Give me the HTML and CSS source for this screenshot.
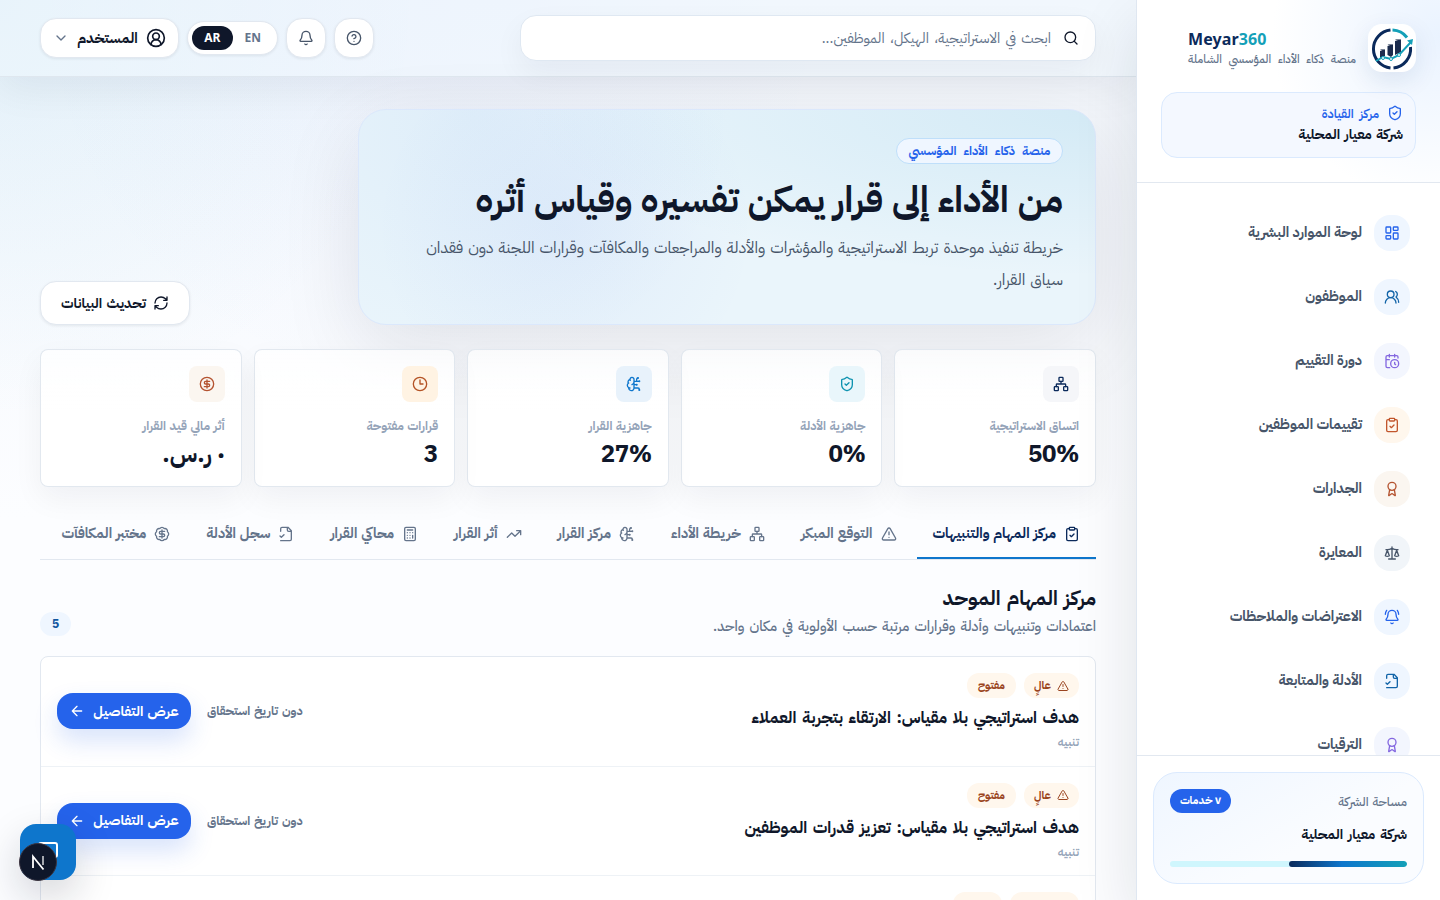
FILE: index.html
```
<!DOCTYPE html>
<html lang="ar" dir="rtl">
<head>
    <meta charset="UTF-8">
    <meta name="viewport" content="width=device-width, initial-scale=1.0">
    <title>Meyar360</title>
    <link rel="stylesheet" href="styles.css">
</head>
<body>
    <!-- Icon set -->
    <svg class="sprite">
        <symbol id="i-dashboard" viewBox="0 0 24 24"><rect x="3" y="3" width="7" height="9" rx="1"/><rect x="14" y="3" width="7" height="5" rx="1"/><rect x="14" y="12" width="7" height="9" rx="1"/><rect x="3" y="16" width="7" height="5" rx="1"/></symbol>
        <symbol id="i-users" viewBox="0 0 24 24"><path d="M18 21a8 8 0 0 0-16 0"/><circle cx="10" cy="8" r="5"/><path d="M22 20c0-3.37-2-6.5-4-8a5 5 0 0 0-.45-8.3"/></symbol>
        <symbol id="i-calendar" viewBox="0 0 24 24"><path d="M21 7.5V6a2 2 0 0 0-2-2H5a2 2 0 0 0-2 2v14a2 2 0 0 0 2 2h3.5M16 2v4M8 2v4M3 10h5M17.5 17.5 16 16.3V14"/><circle cx="16" cy="16" r="6"/></symbol>
        <symbol id="i-clipboard" viewBox="0 0 24 24"><rect x="8" y="2" width="8" height="4" rx="1"/><path d="M16 4h2a2 2 0 0 1 2 2v14a2 2 0 0 1-2 2H6a2 2 0 0 1-2-2V6a2 2 0 0 1 2-2h2M9 14l2 2 4-4"/></symbol>
        <symbol id="i-award" viewBox="0 0 24 24"><path d="m15.477 12.89 1.515 8.526a.5.5 0 0 1-.81.47l-3.58-2.687a1 1 0 0 0-1.197 0l-3.586 2.686a.5.5 0 0 1-.81-.469l1.514-8.526"/><circle cx="12" cy="8" r="6"/></symbol>
        <symbol id="i-scale" viewBox="0 0 24 24"><path d="m16 16 3-8 3 8c-.87.65-1.92 1-3 1s-2.13-.35-3-1ZM2 16l3-8 3 8c-.87.65-1.92 1-3 1s-2.13-.35-3-1ZM7 21h10M12 3v18M3 7h2c2 0 5-1 7-2 2 1 5 2 7 2h2"/></symbol>
        <symbol id="i-bell-ring" viewBox="0 0 24 24"><path d="M10.268 21a2 2 0 0 0 3.464 0M22 8c0-2.3-.8-4.3-2-6M4 2C2.8 3.7 2 5.7 2 8M3.262 15.326A1 1 0 0 0 4 17h16a1 1 0 0 0 .74-1.673C19.41 13.956 18 12.499 18 8A6 6 0 0 0 6 8c0 4.499-1.411 5.956-2.738 7.326"/></symbol>
        <symbol id="i-bell" viewBox="0 0 24 24"><path d="M10.268 21a2 2 0 0 0 3.464 0M3.262 15.326A1 1 0 0 0 4 17h16a1 1 0 0 0 .74-1.673C19.41 13.956 18 12.499 18 8A6 6 0 0 0 6 8c0 4.499-1.411 5.956-2.738 7.326"/></symbol>
        <symbol id="i-file" viewBox="0 0 24 24"><path d="M4 22h14a2 2 0 0 0 2-2V7l-5-5H6a2 2 0 0 0-2 2v4M14 2v4a2 2 0 0 0 2 2h4M3 15l2 2 4-4"/></symbol>
        <symbol id="i-shield" viewBox="0 0 24 24"><path d="M20 13c0 5-3.5 7.5-7.66 8.95a1 1 0 0 1-.67-.01C7.5 20.5 4 18 4 13V6a1 1 0 0 1 1-1c2 0 4.5-1.2 6.24-2.72a1.17 1.17 0 0 1 1.52 0C14.51 3.81 17 5 19 5a1 1 0 0 1 1 1zM9 12l2 2 4-4"/></symbol>
        <symbol id="i-network" viewBox="0 0 24 24"><rect x="16" y="16" width="6" height="6" rx="1"/><rect x="2" y="16" width="6" height="6" rx="1"/><rect x="9" y="2" width="6" height="6" rx="1"/><path d="M5 16v-3a1 1 0 0 1 1-1h12a1 1 0 0 1 1 1v3M12 12V8"/></symbol>
        <symbol id="i-brain" viewBox="0 0 24 24"><path d="M12 5a3 3 0 1 0-5.997.125 4 4 0 0 0-2.526 5.77 4 4 0 0 0 .556 6.588A4 4 0 1 0 12 18ZM9 13a4.5 4.5 0 0 0 3-4M6.003 5.125A3 3 0 0 0 6.401 6.5M3.477 10.896a4 4 0 0 1 .585-.396M6 18a4 4 0 0 1-1.967-.516M12 13h4M12 18h6a2 2 0 0 1 2 2v1M12 8h8M16 8V5a2 2 0 0 1 2-2"/><circle cx="16" cy="13" r=".5"/><circle cx="18" cy="3" r=".5"/><circle cx="20" cy="21" r=".5"/><circle cx="20" cy="8" r=".5"/></symbol>
        <symbol id="i-clock" viewBox="0 0 24 24"><circle cx="12" cy="12" r="10"/><path d="M12 6v6h4.5"/></symbol>
        <symbol id="i-dollar" viewBox="0 0 24 24"><circle cx="12" cy="12" r="10"/><path d="M16 8h-6a2 2 0 1 0 0 4h4a2 2 0 1 1 0 4H8M12 18V6"/></symbol>
        <symbol id="i-badge" viewBox="0 0 24 24"><path d="M3.85 8.62a4 4 0 0 1 4.78-4.77 4 4 0 0 1 6.74 0 4 4 0 0 1 4.78 4.78 4 4 0 0 1 0 6.74 4 4 0 0 1-4.77 4.78 4 4 0 0 1-6.75 0 4 4 0 0 1-4.78-4.77 4 4 0 0 1 0-6.76ZM16 8h-6a2 2 0 1 0 0 4h4a2 2 0 1 1 0 4H8M12 18V6"/></symbol>
        <symbol id="i-calc" viewBox="0 0 24 24"><rect x="4" y="2" width="16" height="20" rx="2"/><path d="M8 6h8M16 14v4M16 10h.01M12 10h.01M8 10h.01M12 14h.01M8 14h.01M12 18h.01M8 18h.01"/></symbol>
        <symbol id="i-trend" viewBox="0 0 24 24"><path d="m22 7-8.5 8.5-5-5L2 17M16 7h6v6"/></symbol>
        <symbol id="i-alert" viewBox="0 0 24 24"><path d="m21.73 18-8-14a2 2 0 0 0-3.48 0l-8 14A2 2 0 0 0 4 21h16a2 2 0 0 0 1.73-3M12 9v4M12 17h.01"/></symbol>
        <symbol id="i-refresh" viewBox="0 0 24 24"><path d="M3 12a9 9 0 0 1 9-9 9.75 9.75 0 0 1 6.74 2.74L21 8M21 3v5h-5M21 12a9 9 0 0 1-9 9 9.75 9.75 0 0 1-6.74-2.74L3 16M8 16H3v5"/></symbol>
        <symbol id="i-search" viewBox="0 0 24 24"><circle cx="11" cy="11" r="8"/><path d="m21 21-4.3-4.3"/></symbol>
        <symbol id="i-help" viewBox="0 0 24 24"><circle cx="12" cy="12" r="10"/><path d="M9.09 9a3 3 0 0 1 5.83 1c0 2-3 3-3 3M12 17h.01"/></symbol>
        <symbol id="i-user" viewBox="0 0 24 24"><path d="M18 20a6 6 0 0 0-12 0"/><circle cx="12" cy="10" r="4"/><circle cx="12" cy="12" r="10"/></symbol>
        <symbol id="i-chevron" viewBox="0 0 24 24"><path d="m6 9 6 6 6-6"/></symbol>
        <symbol id="i-arrow" viewBox="0 0 24 24"><path d="m12 19-7-7 7-7M19 12H5"/></symbol>
        <symbol id="i-message" viewBox="0 0 24 24"><path d="M21 15a2 2 0 0 1-2 2H7l-4 4V5a2 2 0 0 1 2-2h14a2 2 0 0 1 2 2z"/></symbol>
    </svg>

    <div class="app">
        <aside class="sidebar">
            <div class="sidebar-head">
                <div class="brand">
                    <div class="brand-logo">
                        <svg viewBox="0 0 48 48">
                            <g fill="none" stroke-width="3">
                                <path d="M22.500 6.100A19 19 0 0 0 22.500 43.900M25.500 43.900A19 19 0 0 0 42.500 23" stroke="#0b2a5b"/>
                                <path d="M24.500 6A19 19 0 0 1 39 13.500" stroke="#14a0b8"/>
                            </g>
                            <g fill="#1c2c4e"><path d="M12 27l5-2v7l-5 2z"/><path d="M19.500 22l5.500-2v11l-2 2-3.500-2z"/><path d="M27 17l6-2v13l-6 3z"/></g>
                            <g fill="#7d8798"><path d="M12 26l1-1h4v1zM19.500 21l1-1H25v1zM27 16l1-1h5v1z"/></g>
                            <path d="M8 37l7-4 8 2 8-4 12-13" fill="none" stroke="#14a0b8" stroke-width="2"/>
                            <path d="M39 16.500l6-1.500-1 6z" fill="#14a0b8"/>
                            <g fill="#fff" stroke="#14a0b8"><circle cx="15" cy="34" r="1.500"/><circle cx="23" cy="35" r="1.500"/><circle cx="31" cy="31" r="1.500"/></g>
                        </svg>
                    </div>
                    <div class="brand-text">
                        <div class="brand-name" dir="ltr">Meyar<span>360</span></div>
                        <div class="brand-tag">منصة ذكاء الأداء المؤسسي الشاملة</div>
                    </div>
                </div>
                <div class="center-card">
                    <div class="center-label"><svg class="icon"><use href="#i-shield"/></svg><span>مركز القيادة</span></div>
                    <div class="center-name">شركة معيار المحلية</div>
                </div>
            </div>

            <nav class="nav">
                <a class="nav-item"><span class="nav-icon blue"><svg class="icon"><use href="#i-dashboard"/></svg></span><span>لوحة الموارد البشرية</span></a>
                <a class="nav-item"><span class="nav-icon ocean"><svg class="icon"><use href="#i-users"/></svg></span><span>الموظفون</span></a>
                <a class="nav-item"><span class="nav-icon violet"><svg class="icon"><use href="#i-calendar"/></svg></span><span>دورة التقييم</span></a>
                <a class="nav-item"><span class="nav-icon orange"><svg class="icon"><use href="#i-clipboard"/></svg></span><span>تقييمات الموظفين</span></a>
                <a class="nav-item"><span class="nav-icon sand"><svg class="icon"><use href="#i-award"/></svg></span><span>الجدارات</span></a>
                <a class="nav-item"><span class="nav-icon slate"><svg class="icon"><use href="#i-scale"/></svg></span><span>المعايرة</span></a>
                <a class="nav-item"><span class="nav-icon blue"><svg class="icon"><use href="#i-bell-ring"/></svg></span><span>الاعتراضات والملاحظات</span></a>
                <a class="nav-item"><span class="nav-icon ocean"><svg class="icon"><use href="#i-file"/></svg></span><span>الأدلة والمتابعة</span></a>
                <a class="nav-item"><span class="nav-icon violet"><svg class="icon"><use href="#i-award"/></svg></span><span>الترقيات</span></a>
            </nav>

            <div class="sidebar-foot">
                <div class="space-card">
                    <div class="space-top"><span class="space-label">مساحة الشركة</span><span class="space-badge">٧ خدمات</span></div>
                    <div class="space-name">شركة معيار المحلية</div>
                    <div class="space-bar"><div class="space-fill"></div></div>
                </div>
            </div>
        </aside>

        <div class="page">
            <header class="topbar">
                <div class="search"><svg class="icon"><use href="#i-search"/></svg><span>ابحث في الاستراتيجية، الهيكل، الموظفين...</span></div>
                <div class="tools">
                    <button class="tool-btn"><svg class="icon"><use href="#i-help"/></svg></button>
                    <button class="tool-btn"><svg class="icon"><use href="#i-bell"/></svg></button>
                    <div class="lang"><span>EN</span><span class="on">AR</span></div>
                    <button class="user-btn"><svg class="icon user"><use href="#i-user"/></svg><span>المستخدم</span><svg class="icon chevron"><use href="#i-chevron"/></svg></button>
                </div>
            </header>

            <main class="content">
                <section class="intro">
                    <div class="hero">
                        <span class="hero-badge"><span>منصة ذكاء الأداء المؤسسي</span></span>
                        <h1>من الأداء إلى قرار يمكن تفسيره وقياس أثره</h1>
                        <p>خريطة تنفيذ موحدة تربط الاستراتيجية والمؤشرات والأدلة والمراجعات والمكافآت وقرارات اللجنة دون فقدان<br>سياق القرار.</p>
                    </div>
                    <button class="refresh"><svg class="icon"><use href="#i-refresh"/></svg><span>تحديث البيانات</span></button>
                </section>

                <section class="stats">
                    <div class="stat"><span class="stat-icon navy"><svg class="icon"><use href="#i-network"/></svg></span><div class="stat-label">اتساق الاستراتيجية</div><div class="stat-value"><span dir="ltr">50%</span></div></div>
                    <div class="stat"><span class="stat-icon teal"><svg class="icon"><use href="#i-shield"/></svg></span><div class="stat-label">جاهزية الأدلة</div><div class="stat-value"><span dir="ltr">0%</span></div></div>
                    <div class="stat"><span class="stat-icon sky"><svg class="icon"><use href="#i-brain"/></svg></span><div class="stat-label">جاهزية القرار</div><div class="stat-value"><span dir="ltr">27%</span></div></div>
                    <div class="stat"><span class="stat-icon amber"><svg class="icon"><use href="#i-clock"/></svg></span><div class="stat-label">قرارات مفتوحة</div><div class="stat-value">3</div></div>
                    <div class="stat"><span class="stat-icon sand"><svg class="icon"><use href="#i-dollar"/></svg></span><div class="stat-label">أثر مالي قيد القرار</div><div class="stat-value">٠ ر.س.</div></div>
                </section>

                <nav class="tabs">
                    <a class="tab active"><svg class="icon"><use href="#i-clipboard"/></svg><span>مركز المهام والتنبيهات</span></a>
                    <a class="tab"><svg class="icon"><use href="#i-alert"/></svg><span>التوقع المبكر</span></a>
                    <a class="tab"><svg class="icon"><use href="#i-network"/></svg><span>خريطة الأداء</span></a>
                    <a class="tab"><svg class="icon"><use href="#i-brain"/></svg><span>مركز القرار</span></a>
                    <a class="tab"><svg class="icon"><use href="#i-trend"/></svg><span>أثر القرار</span></a>
                    <a class="tab"><svg class="icon"><use href="#i-calc"/></svg><span>محاكي القرار</span></a>
                    <a class="tab"><svg class="icon"><use href="#i-file"/></svg><span>سجل الأدلة</span></a>
                    <a class="tab"><svg class="icon"><use href="#i-badge"/></svg><span>مختبر المكافآت</span></a>
                </nav>

                <section class="section-head">
                    <div>
                        <h2>مركز المهام الموحد</h2>
                        <p>اعتمادات وتنبيهات وأدلة وقرارات مرتبة حسب الأولوية في مكان واحد.</p>
                    </div>
                    <span class="count">5</span>
                </section>

                <section class="tasks">
                    <article class="task">
                        <div class="task-main">
                            <div class="task-tags"><span class="tag"><svg class="icon"><use href="#i-alert"/></svg><span>عالٍ</span></span><span class="tag"><span>مفتوح</span></span></div>
                            <h3>هدف استراتيجي بلا مقياس: الارتقاء بتجربة العملاء</h3>
                            <div class="task-kind">تنبيه</div>
                        </div>
                        <span class="task-due">دون تاريخ استحقاق</span>
                        <button class="task-btn"><span>عرض التفاصيل</span><svg class="icon"><use href="#i-arrow"/></svg></button>
                    </article>
                    <article class="task">
                        <div class="task-main">
                            <div class="task-tags"><span class="tag"><svg class="icon"><use href="#i-alert"/></svg><span>عالٍ</span></span><span class="tag"><span>مفتوح</span></span></div>
                            <h3>هدف استراتيجي بلا مقياس: تعزيز قدرات الموظفين</h3>
                            <div class="task-kind">تنبيه</div>
                        </div>
                        <span class="task-due">دون تاريخ استحقاق</span>
                        <button class="task-btn"><span>عرض التفاصيل</span><svg class="icon"><use href="#i-arrow"/></svg></button>
                    </article>
                    <article class="task">
                        <div class="task-main">
                            <div class="task-tags"><span class="tag wide"><svg class="icon"><use href="#i-alert"/></svg><span>متوسط</span></span><span class="tag"><span>مفتوح</span></span></div>
                        </div>
                    </article>
                </section>
            </main>
        </div>
    </div>

    <button class="chat"><svg class="icon"><use href="#i-message"/></svg></button>
    <div class="dev-badge"><svg viewBox="0 0 36 36"><path d="M13 24V12.500L23.500 25.500" /><path d="M23 12v9" opacity=".7"/></svg></div>
</body>
</html>
```
FILE: styles.css
```
* {
    box-sizing: border-box;
}

body {
    margin: 0;
    height: 900px;
    overflow: hidden;
    font-family: "IBM Plex Sans Arabic", "Noto Sans Arabic", "Noto Sans", "DejaVu Sans", sans-serif;
    color: #0f172a;
    background: #fcfdff;
}

h1, h2, h3, p {
    margin: 0;
}

button {
    font-family: inherit;
    border: none;
    padding: 0;
    margin: 0;
}

span {
    white-space: nowrap;
}

.sprite {
    display: none;
}

.icon {
    width: 16px;
    height: 16px;
    flex: none;
    fill: none;
    stroke: currentColor;
    stroke-width: 2;
    stroke-linecap: round;
    stroke-linejoin: round;
}

.app {
    display: flex;
    height: 900px;
    overflow: hidden;
}

/* Sidebar */
.sidebar {
    width: 304px;
    flex: none;
    display: flex;
    flex-direction: column;
    background: #fff;
    border-left: 1px solid #dfe7f1;
    box-shadow: 0 24px 60px rgba(15, 23, 42, 0.12);
    z-index: 2;
}

.sidebar-head {
    height: 183px;
    flex: none;
    padding: 24px;
    border-bottom: 1px solid #e2e8f0;
    background: radial-gradient(circle at 100% 20%, #eaf3ff 0, #fff 50%);
}

.brand {
    display: flex;
    gap: 12px;
    height: 48px;
}

.brand-logo {
    width: 48px;
    height: 48px;
    border-radius: 14px;
    background: #fff;
    box-shadow: 0 8px 24px rgba(15, 60, 120, 0.1);
}

.brand-text {
    width: 168px;
}

.brand-name {
    font: 700 16px/22px "Noto Sans", sans-serif;
    letter-spacing: 0.1px;
    margin-top: 4px;
    color: #0b2a5b;
}

.brand-name span {
    color: #14a0b8;
}

.brand-tag {
    font-size: 11.5px;
    line-height: 20px;
    font-weight: 500;
    word-spacing: 4px;
    color: #64748b;
    white-space: nowrap;
}

.center-card {
    margin-top: 20px;
    height: 66px;
    padding: 11px 12px;
    border: 1px solid #dbeafe;
    border-radius: 16px;
    background: #f4f8ff;
}

.center-label {
    display: flex;
    align-items: center;
    gap: 8px;
    height: 18px;
    font-size: 12.5px;
    font-weight: 600;
    word-spacing: 3px;
    color: #2563eb;
}

.center-name {
    margin-top: 1px;
    font-size: 14px;
    line-height: 24px;
    font-weight: 700;
    word-spacing: 1px;
}

.nav {
    flex: 1;
    min-height: 0;
    overflow: hidden;
    padding: 18px 30px 0 18px;
}

.nav-item {
    display: flex;
    align-items: center;
    gap: 12px;
    height: 64px;
    font-size: 14.2px;
    font-weight: 700;
    color: #475569;
}

.nav-item > span:last-child {
    padding-bottom: 2px;
}

.nav-icon {
    display: flex;
    align-items: center;
    justify-content: center;
    width: 36px;
    height: 36px;
    border-radius: 16px;
}

.blue { background: #eff6ff; color: #2563eb; }
.ocean { background: #eff6ff; color: #1264a8; }
.violet { background: #f3f6fe; color: #8468e0; }
.orange { background: #fff7ed; color: #c2562c; }
.sand { background: #fbf6f0; color: #b45330; }
.slate { background: #f1f5f9; color: #475569; }
.navy { background: #f5f6f9; color: #0b2a5b; }
.teal { background: #e9f6fb; color: #0e93b0; }
.sky { background: #e8f2fb; color: #0e76cc; }
.amber { background: #fff3e3; color: #b45325; }

.sidebar-foot {
    height: 145px;
    flex: none;
    padding: 16px;
    border-top: 1px solid #e2e8f0;
}

.space-card {
    height: 112px;
    padding: 16px;
    border: 1px solid #dbeafe;
    border-radius: 24px;
    background: linear-gradient(150deg, #eff6ff, #fafcff 60%);
}

.space-top {
    display: flex;
    justify-content: space-between;
    align-items: center;
    height: 24px;
}

.space-label {
    font-size: 12.5px;
    font-weight: 500;
    word-spacing: 1px;
    color: #64748b;
}

.space-badge {
    width: 61px;
    height: 24px;
    line-height: 23px;
    border-radius: 12px;
    background: #2563eb;
    color: #fff;
    font-size: 11px;
    font-weight: 700;
    text-align: center;
}

.space-name {
    margin-top: 10px;
    font-size: 14px;
    line-height: 24px;
    font-weight: 700;
    word-spacing: 1.5px;
}

.space-bar {
    margin-top: 14px;
    height: 6px;
    border-radius: 3px;
    background: #cff6fd;
    overflow: hidden;
}

.space-fill {
    width: 50%;
    height: 100%;
    border-radius: 3px;
    background: linear-gradient(270deg, #14a0b8, #0e76cc 55%, #0b2a5b);
}

/* Page */
.page {
    flex: 1;
    min-width: 0;
    background:
        radial-gradient(circle at 0 0, rgba(14, 150, 200, 0.08), transparent 420px),
        radial-gradient(circle at 38% 0, rgba(59, 110, 240, 0.04), transparent 400px),
        linear-gradient(180deg, #f3f7fd 0, #fcfdff 520px);
}

.topbar {
    height: 77px;
    padding: 0 40px;
    display: flex;
    justify-content: space-between;
    align-items: center;
    border-bottom: 1px solid #dfe7ef;
    background: rgba(240, 248, 253, 0.5);
    box-shadow: 0 12px 40px rgba(15, 23, 42, 0.06);
}

.search {
    display: flex;
    align-items: center;
    gap: 12px;
    width: 576px;
    height: 46px;
    padding: 0 16px;
    border: 1px solid #dfe8f2;
    border-radius: 16px;
    background: #fff;
    box-shadow: 0 12px 30px rgba(15, 23, 42, 0.05);
    font-size: 14.4px;
    word-spacing: 2px;
    color: #64748b;
}

.search .icon {
    color: #0f172a;
}

.tools {
    display: flex;
    align-items: center;
    gap: 8px;
}

.tool-btn, .user-btn, .lang, .refresh {
    display: flex;
    align-items: center;
    justify-content: center;
    border: 1px solid #e2e8f0;
    background: #fff;
    box-shadow: 0 1px 3px rgba(15, 23, 42, 0.08);
}

.tool-btn {
    width: 40px;
    height: 40px;
    border-radius: 16px;
    color: #475569;
}

.lang {
    width: 91px;
    height: 34px;
    padding: 4px;
    border-radius: 17px;
    font: 700 12px/24px "Noto Sans", sans-serif;
    color: #64748b;
}

.lang span {
    width: 41px;
    border-radius: 12px;
    text-align: center;
}

.lang .on {
    background: #0f172a;
    color: #fff;
}

.user-btn {
    width: 139px;
    height: 40px;
    border-radius: 16px;
    gap: 8px;
    font-size: 14.4px;
    font-weight: 700;
    color: #0f172a;
}

.user-btn .user {
    width: 20px;
    height: 20px;
}

.user-btn .chevron {
    color: #64748b;
}

.content {
    padding: 32px 40px 0;
}

.intro {
    display: flex;
    justify-content: space-between;
    align-items: flex-end;
}

.hero {
    width: 738px;
    height: 216px;
    padding: 28px 32px;
    border: 1px solid #dbe8fc;
    border-radius: 28px;
    background:
        radial-gradient(ellipse at 100% 0, rgba(14, 140, 200, 0.1), transparent 55%),
        radial-gradient(circle at 28% 55%, rgba(60, 90, 240, 0.05), transparent 35%),
        radial-gradient(circle at 15% 0, rgba(40, 120, 220, 0.06), transparent 40%),
        #eaf5fb;
    box-shadow: 0 24px 80px rgba(15, 23, 42, 0.1);
}

.hero-badge {
    display: flex;
    align-items: center;
    justify-content: center;
    width: 167px;
    height: 26px;
    border: 1px solid #bfdffa;
    border-radius: 13px;
    background: #eff6ff;
    color: #2563eb;
    font-size: 12.4px;
    font-weight: 700;
    word-spacing: 4px;
}

.hero h1 {
    margin-top: 14px;
    font-size: 36px;
    line-height: 45px;
    font-weight: 700;
    word-spacing: 0.5px;
    white-space: nowrap;
}

.hero p {
    margin-top: 9px;
    font-size: 16px;
    line-height: 32px;
    word-spacing: 1.2px;
    color: #475569;
    white-space: nowrap;
}

.refresh {
    width: 150px;
    height: 44px;
    border-radius: 16px;
    gap: 7px;
    font-size: 14px;
    font-weight: 700;
    word-spacing: 1px;
    color: #0f172a;
}

.stats {
    display: grid;
    grid-template-columns: repeat(5, 1fr);
    gap: 12px;
    margin-top: 24px;
}

.stat {
    height: 138px;
    padding: 16px;
    border: 1px solid rgba(203, 213, 225, 0.55);
    border-radius: 8px;
    background: linear-gradient(180deg, rgba(255, 255, 255, 0.7), #fff 45%);
    box-shadow: 0 12px 30px rgba(15, 23, 42, 0.05);
}

.stat-icon {
    display: flex;
    align-items: center;
    justify-content: center;
    width: 36px;
    height: 36px;
    border-radius: 8px;
}

.stat-label {
    margin-top: 14px;
    font-size: 12.4px;
    line-height: 20px;
    font-weight: 700;
    word-spacing: 0.5px;
    color: #94a3b8;
    white-space: nowrap;
}

.stat-value {
    margin-top: 2px;
    font-size: 24px;
    line-height: 32px;
    font-weight: 700;
}

.stat-value span {
    letter-spacing: -0.4px;
}

.tabs {
    display: flex;
    gap: 4px;
    height: 49px;
    margin-top: 24px;
    border-bottom: 1px solid #e2e8f0;
}

.tab {
    display: flex;
    align-items: center;
    gap: 8px;
    height: 48px;
    padding: 0 16px;
    font-size: 14.2px;
    font-weight: 700;
    word-spacing: 0.5px;
    color: #64748b;
    border-bottom: 2px solid transparent;
}

.tab > span {
    padding-bottom: 2px;
}

.tab.active {
    color: #0b2a5b;
    border-bottom-color: #0e76cc;
}

.section-head {
    display: flex;
    justify-content: space-between;
    align-items: flex-end;
    margin-top: 24px;
    height: 52px;
}

.section-head h2 {
    font-size: 20px;
    line-height: 28px;
    font-weight: 700;
    word-spacing: 1.5px;
}

.section-head p {
    padding-top: 2px;
    height: 24px;
    font-size: 14.3px;
    line-height: 24px;
    font-weight: 500;
    word-spacing: 1.7px;
    color: #64748b;
}

.count {
    width: 31px;
    height: 24px;
    border-radius: 12px;
    background: #eff6ff;
    color: #1256a0;
    font-size: 12px;
    line-height: 24px;
    font-weight: 700;
    text-align: center;
}

.tasks {
    margin-top: 20px;
    border: 1px solid #e2e8f0;
    border-radius: 8px;
    background: #fff;
}

.task {
    display: flex;
    align-items: center;
    height: 109.5px;
    padding: 0 16px;
    border-bottom: 1px solid #eef2f6;
}

.task-main {
    flex: 1;
    align-self: flex-start;
    padding-top: 16px;
}

.task-tags {
    display: flex;
    gap: 8px;
}

.tag {
    display: flex;
    align-items: center;
    justify-content: center;
    gap: 6px;
    width: 49px;
    height: 25px;
    border-radius: 12px;
    background: #fff7ed;
    color: #9a4420;
    font-size: 11px;
    font-weight: 700;
}

.tag:first-child {
    width: 55px;
}

.tag.wide:first-child {
    width: 69px;
}

.tag .icon {
    width: 12px;
    height: 12px;
}

.task h3 {
    margin-top: 7px;
    font-size: 16.4px;
    line-height: 26px;
    font-weight: 700;
    word-spacing: 1.7px;
}

.task-kind {
    margin-top: 2px;
    font-size: 12px;
    line-height: 18px;
    font-weight: 600;
    color: #94a3b8;
}

.task-due {
    margin-left: 16px;
    font-size: 12.3px;
    font-weight: 700;
    word-spacing: 1px;
    color: #64748b;
}

.task-btn {
    display: flex;
    align-items: center;
    justify-content: center;
    gap: 8px;
    width: 134px;
    height: 36px;
    border-radius: 16px;
    background: #2563eb;
    color: #fff;
    font-size: 14px;
    font-weight: 700;
    word-spacing: 1px;
    box-shadow: 0 12px 24px rgba(37, 99, 235, 0.18);
}

/* Floating buttons */
.chat {
    position: fixed;
    left: 20px;
    top: 824px;
    display: flex;
    align-items: center;
    justify-content: center;
    width: 56px;
    height: 56px;
    border-radius: 16px;
    background: #0e76cc;
    color: #fff;
    box-shadow: 0 16px 40px rgba(15, 23, 42, 0.18);
    z-index: 5;
}

.chat .icon {
    width: 24px;
    height: 24px;
}

.dev-badge {
    position: fixed;
    left: 19px;
    top: 843px;
    width: 38px;
    height: 38px;
    border-radius: 50%;
    border: 1px solid #3b3440;
    background: #0f172a;
    z-index: 6;
}

.dev-badge svg {
    display: block;
    fill: none;
    stroke: #fff;
    stroke-width: 1.8;
}
```
